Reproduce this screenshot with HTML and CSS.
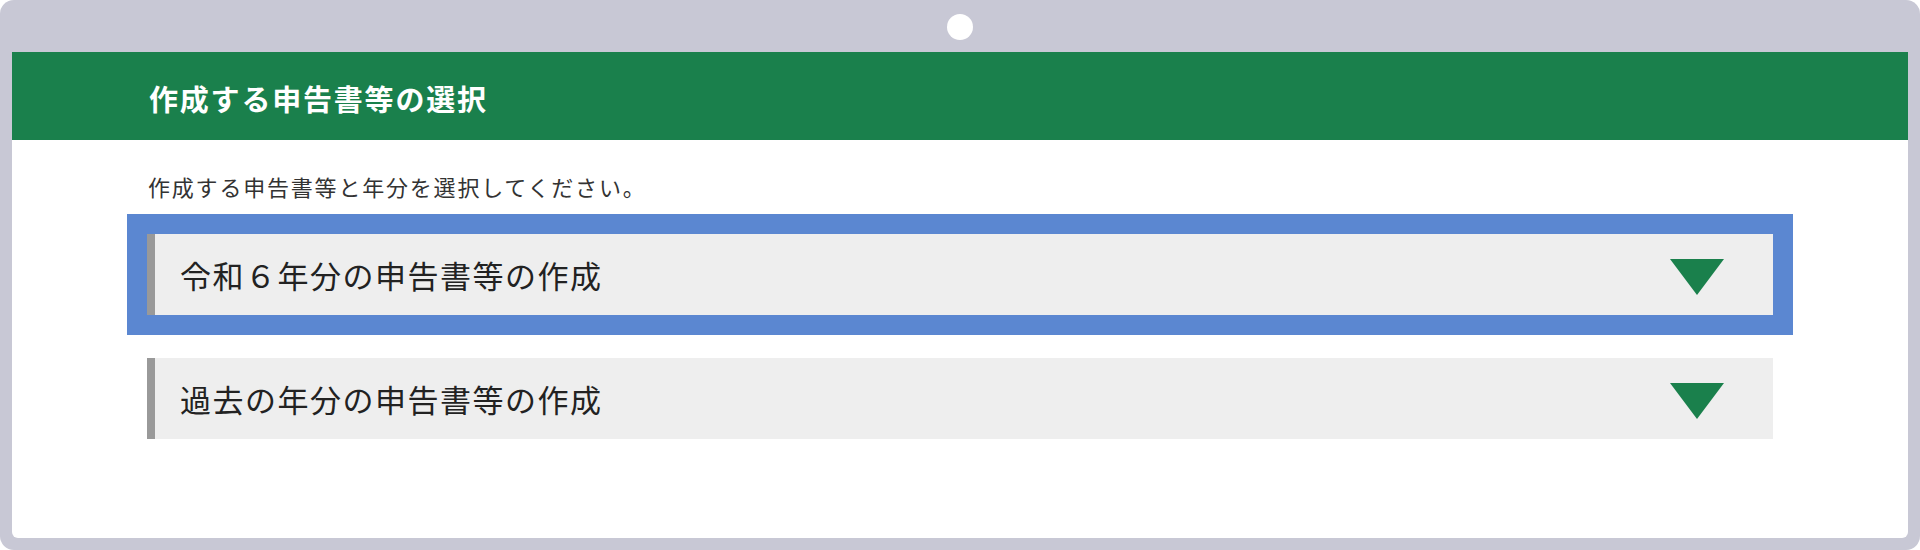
FILE: index.html
```html
<!DOCTYPE html>
<html lang="ja">
<head>
  <meta charset="UTF-8" />
  <meta name="viewport" content="width=device-width, initial-scale=1.0"/>
  <title>作成する申告書等の選択</title>
  <link rel="stylesheet" href="styles.css">
</head>
<body>
  <div class="device">
    <div class="device-top">
      <span class="camera"></span>
    </div>

    <div class="screen">
      <header class="page-header">
        <h1>作成する申告書等の選択</h1>
      </header>

      <main class="content">
        <p class="lead">作成する申告書等と年分を選択してください。</p>

        <button class="accordion is-focused" type="button">
          <span class="accordion-label">令和６年分の申告書等の作成</span>
          <span class="arrow"></span>
        </button>

        <button class="accordion" type="button">
          <span class="accordion-label">過去の年分の申告書等の作成</span>
          <span class="arrow"></span>
        </button>
      </main>
    </div>
  </div>
</body>
</html>
```

FILE: styles.css
```css
  body {
    margin: 0;
    padding: 0;
    background: #ffffff;
    font-family: "Noto Sans CJK JP", "Noto Sans", sans-serif;
  }

  /* tablet frame round the page */
  .device {
    box-sizing: border-box;
    height: 550px;
    padding: 0 12px 12px;
    background: #c8c8d5;
    border-radius: 14px;
    display: flex;
    flex-direction: column;
  }
  .device-top {
    height: 52px;
    display: flex;
    justify-content: center;
    align-items: center;
    padding-top: 2px;
    box-sizing: border-box;
  }
  .camera {
    width: 26px;
    height: 26px;
    border-radius: 50%;
    background: #ffffff;
  }
  .screen {
    flex: 1;
    background: #ffffff;
    border-radius: 0 0 6px 6px;
  }

  .page-header {
    height: 88px;
    background: #1a804c;
    padding-left: 137px;
    display: flex;
    align-items: center;
  }
  .page-header h1 {
    margin: 0;
    color: #ffffff;
    font-size: 29px;
    font-weight: bold;
    letter-spacing: 1.8px;
    padding-top: 3px;
  }

  .content {
    padding: 31px 135px 0;
  }
  .lead {
    margin: 0 0 33px 1px;
    font-size: 22px;
    line-height: 30px;
    letter-spacing: 1.8px;
    color: #333333;
  }

  .accordion {
    width: 100%;
    height: 81px;
    margin: 0;
    padding: 0 49px 0 25px;
    border: none;
    border-left: 8px solid #999999;
    background: #eeeeee;
    display: flex;
    justify-content: space-between;
    align-items: center;
    font-family: inherit;
    cursor: pointer;
  }
  .accordion + .accordion {
    margin-top: 43px;
  }
  .accordion.is-focused {
    outline: 20px solid #5b87d1;
  }
  .accordion-label {
    font-size: 31px;
    letter-spacing: 1.5px;
    color: #222222;
  }
  .arrow {
    width: 0;
    height: 0;
    margin-top: 5px;
    border-left: 27px solid transparent;
    border-right: 27px solid transparent;
    border-top: 36px solid #1a804c;
  }
```
